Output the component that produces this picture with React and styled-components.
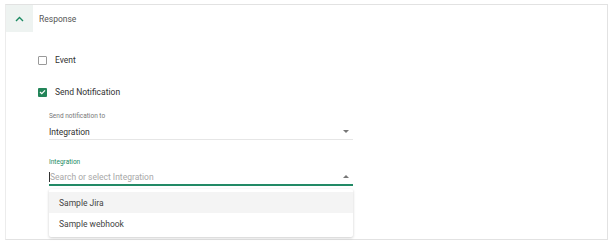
import React, { useState } from "react";
import styled, { createGlobalStyle } from "styled-components";

const GlobalStyle = createGlobalStyle`
  html, body {
    margin: 0;
    padding: 0;
    background: #fff;
    font-family: Roboto, "Liberation Sans", sans-serif;
    color: #333;
  }
`;

const Page = styled.div`
  padding: 4px 4px 0 5px;
  width: 612px;
  height: 245px;
  box-sizing: border-box;
  overflow: hidden;
`;

const Card = styled.section`
  border: 1px solid #e2e2e2;
  border-left-color: #ececec;
  height: 236px;
  box-sizing: border-box;
  width: 603px;
`;

const Header = styled.div`
  display: flex;
  align-items: center;
  height: 27px;
`;

const Toggle = styled.div`
  width: 27px;
  height: 27px;
  background: #eef3f1;
  display: flex;
  align-items: center;
  justify-content: center;
  color: #1b8a62;
`;

const Title = styled.span`
  font-size: 8.5px;
  margin-left: 6px;
  color: #555;
`;

const Body = styled.div`
  padding: 23px 0 0 32px;
  display: flex;
  flex-direction: column;
`;

const CheckRow = styled.label`
  display: flex;
  align-items: center;
  height: 10px;
  margin-bottom: ${p => p.$gap || 0}px;
  font-size: 8.5px;
  color: #333;
`;

const Box = styled.span`
  width: 9px;
  height: 9px;
  box-sizing: border-box;
  border-radius: 1px;
  border: ${p => (p.$checked ? "none" : "1px solid #9a9a9a")};
  background: ${p => (p.$checked ? "#238559" : "#fff")};
  display: flex;
  align-items: center;
  justify-content: center;
  margin-right: 8px;
`;

const Fields = styled.div`
  margin-left: 11px;
  width: 304px;
  display: flex;
  flex-direction: column;
`;

const Field = styled.div`
  display: flex;
  flex-direction: column;
  margin-top: ${p => p.$top || 0}px;
`;

const FieldLabel = styled.span`
  font-size: 6.5px;
  color: ${p => (p.$active ? "#1b8a62" : "#777")};
  line-height: 8px;
`;

const InputRow = styled.div`
  display: flex;
  align-items: center;
  justify-content: space-between;
  height: 15px;
  margin-top: ${p => (p.$active ? 3 : 4)}px;
  border-bottom: ${p => (p.$active ? "2px solid #228a66" : "1px solid #e6e6e6")};
  padding-right: 4px;
`;

const Value = styled.span`
  font-size: 8.5px;
  color: #333;
`;

const Search = styled.input`
  border: none;
  outline: none;
  padding: 0;
  font-family: inherit;
  font-size: 8.5px;
  color: #333;
  flex: 1;
  border-left: 1px solid #333;
  height: 10px;
  &::placeholder {
    color: #a8a8a8;
  }
`;

const Caret = styled.span`
  width: 0;
  height: 0;
  border-left: 3px solid transparent;
  border-right: 3px solid transparent;
  ${p =>
    p.$up
      ? "border-bottom: 3px solid #777;"
      : "border-top: 3px solid #777;"}
`;

const Menu = styled.ul`
  list-style: none;
  margin: 3px 0 0;
  padding: 3px 0;
  background: #fff;
  border-radius: 2px;
  box-shadow: 0 1px 3px rgba(0, 0, 0, 0.2);
`;

const Item = styled.li`
  height: 21px;
  display: flex;
  align-items: center;
  padding-left: 10px;
  font-size: 8.5px;
  color: #444;
  background: ${p => (p.$hover ? "#f4f4f4" : "#fff")};
`;

export default function App() {
  const [query, setQuery] = useState("");

  return (
    <Page>
      <GlobalStyle />
      <Card>
        <Header>
          <Toggle>
            <svg width="9" height="6" viewBox="0 0 9 6">
              <path d="M1 5 L4.5 1.5 L8 5" fill="none" stroke="currentColor" strokeWidth="1.4" />
            </svg>
          </Toggle>
          <Title>Response</Title>
        </Header>
        <Body>
          <CheckRow $gap={22}>
            <Box />
            Event
          </CheckRow>
          <CheckRow>
            <Box $checked>
              <svg width="7" height="6" viewBox="0 0 7 6">
                <path d="M1 3 L2.8 4.7 L6 1.3" fill="none" stroke="#fff" strokeWidth="1.2" />
              </svg>
            </Box>
            Send Notification
          </CheckRow>
          <Fields>
            <Field $top={15}>
              <FieldLabel>Send notification to</FieldLabel>
              <InputRow>
                <Value>Integration</Value>
                <Caret />
              </InputRow>
            </Field>
            <Field $top={18}>
              <FieldLabel $active>Integration</FieldLabel>
              <InputRow $active>
                <Search
                  value={query}
                  onChange={e => setQuery(e.target.value)}
                  placeholder="Search or select Integration"
                />
                <Caret $up />
              </InputRow>
            </Field>
            <Menu>
              <Item $hover>Sample Jira</Item>
              <Item>Sample webhook</Item>
            </Menu>
          </Fields>
        </Body>
      </Card>
    </Page>
  );
}
